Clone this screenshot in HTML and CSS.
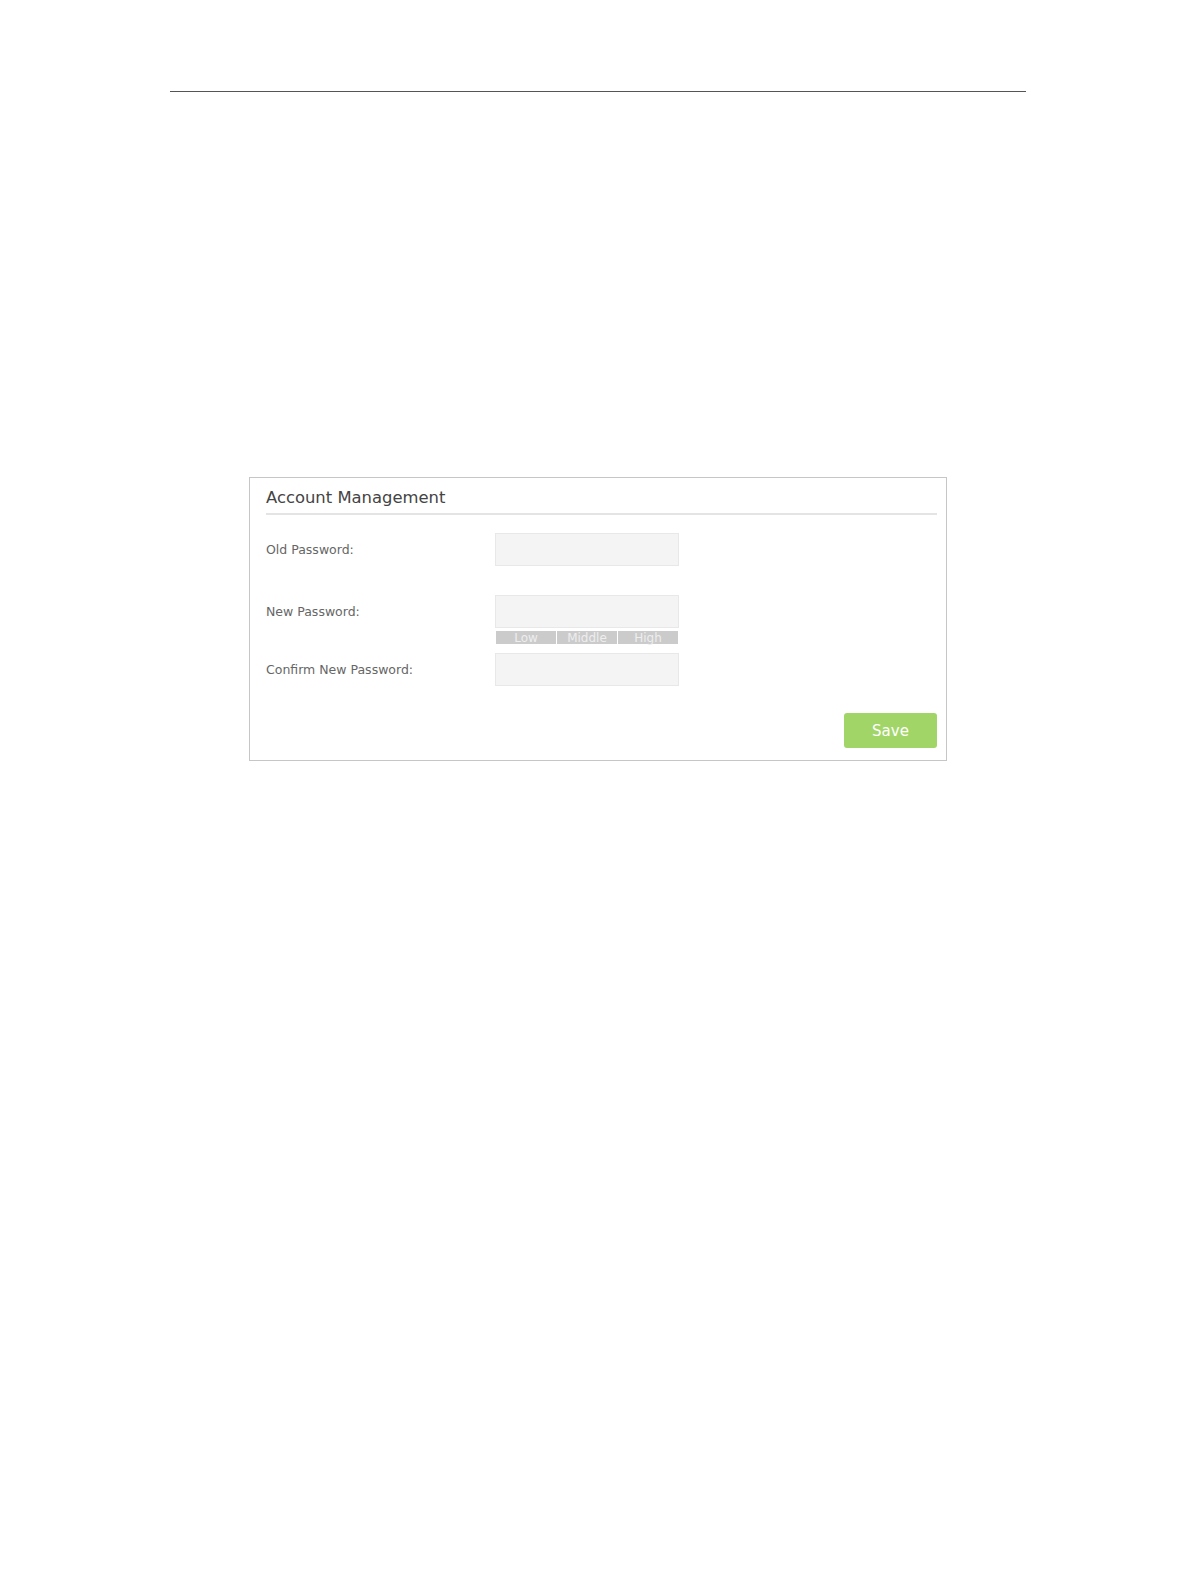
FILE: index.html
```html
<!DOCTYPE html>
<html>
<head>
<meta charset="utf-8">
<link rel="stylesheet" href="styles.css">
</head>
<body>
<div class="rule"></div>
<div class="panel">
  <div class="panel-title">Account Management</div>
  <div class="form">
    <div class="row">
      <label class="label">Old Password:</label>
      <div class="field"><input class="input" type="password"></div>
    </div>
    <div class="row row-new">
      <label class="label">New Password:</label>
      <div class="field">
        <input class="input" type="password">
        <div class="strength">
          <span class="seg">Low</span>
          <span class="seg">Middle</span>
          <span class="seg">High</span>
        </div>
      </div>
    </div>
    <div class="row row-confirm">
      <label class="label">Confirm New Password:</label>
      <div class="field"><input class="input" type="password"></div>
    </div>
  </div>
  <div class="actions">
    <button class="btn-save" type="button">Save</button>
  </div>
</div>
</body>
</html>
```
FILE: styles.css
```css
html, body {
  margin: 0;
  padding: 0;
  background: #ffffff;
}

body {
  font-family: "DejaVu Sans", Verdana, sans-serif;
  color: #555;
}

.rule {
  margin: 91px 0 0 170px;
  width: 856px;
  border-top: 1px solid #555;
}

.panel {
  margin: 385px 0 0 249px;
  border: 1px solid #c6c6c6;
  padding: 0 9px 12px 16px;
  box-sizing: content-box;
  width: 671px;
}

.panel-title {
  font-size: 16.4px;
  line-height: 20px;
  color: #444;
  padding: 10px 0 5px 0;
  border-bottom: 2px solid #e4e4e4;
}

.form {
  display: flex;
  flex-direction: column;
  margin-top: 18px;
}

.row {
  display: grid;
  grid-template-columns: 229px 184px;
  align-items: start;
}

.row-new {
  margin-top: 29px;
}

.row-confirm {
  margin-top: 9px;
}

.label {
  font-size: 12.5px;
  color: #666;
  line-height: 33px;
  height: 33px;
}

.field {
  display: flex;
  flex-direction: column;
}

.input {
  box-sizing: border-box;
  width: 184px;
  height: 33px;
  margin: 0;
  background: #f4f4f4;
  border: 1px solid #e8e8e8;
  border-radius: 0;
  outline: none;
}

.strength {
  display: flex;
  gap: 1px;
  margin: 3px 1px 0 1px;
  height: 13px;
}

.seg {
  flex: 1;
  background: #cbcbcb;
  color: #eeeeee;
  font-size: 12px;
  line-height: 14px;
  text-align: center;
}

.actions {
  display: flex;
  justify-content: flex-end;
  margin-top: 27px;
}

.btn-save {
  width: 93px;
  height: 35px;
  background: #a2d568;
  color: #ffffff;
  border: none;
  border-radius: 3px;
  font-family: "DejaVu Sans", Verdana, sans-serif;
  font-size: 15px;
  font-weight: normal;
  padding: 0;
}
```
